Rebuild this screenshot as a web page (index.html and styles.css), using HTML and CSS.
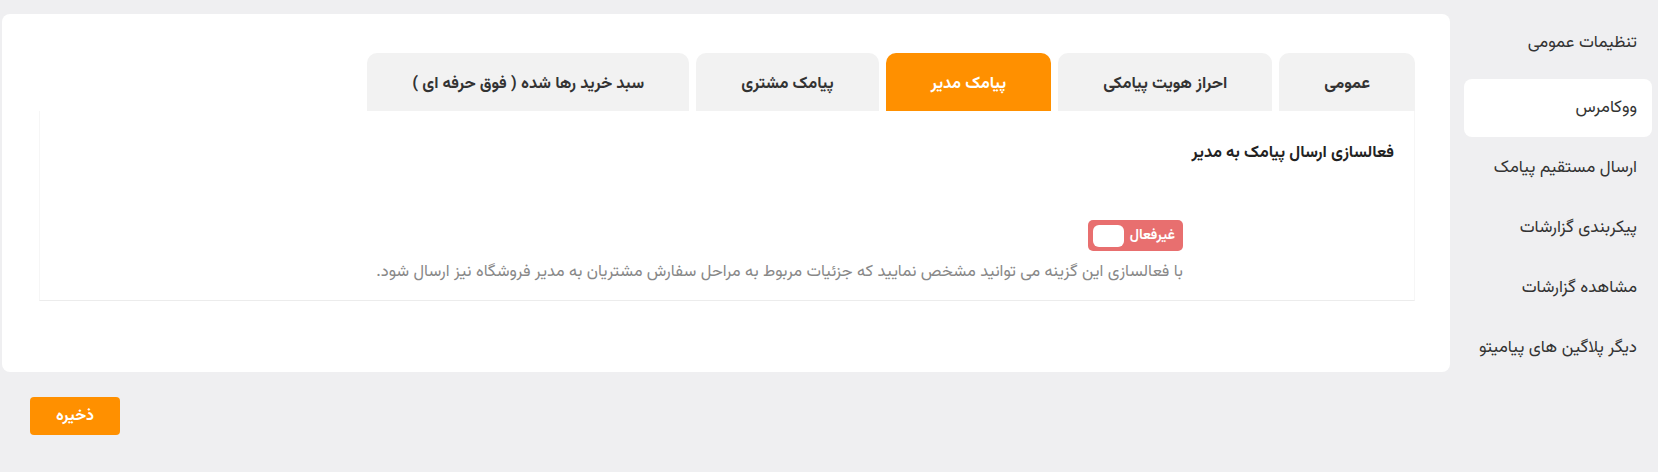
FILE: index.html
```html
<!DOCTYPE html>
<html lang="fa" dir="rtl">
<head>
<meta charset="utf-8">
<title>تنظیمات</title>
<link rel="stylesheet" href="styles.css">
</head>
<body>
<div class="layout">
  <nav class="sidebar">
    <a class="side-item">تنظیمات عمومی</a>
    <a class="side-item active">ووکامرس</a>
    <a class="side-item">ارسال مستقیم پیامک</a>
    <a class="side-item">پیکربندی گزارشات</a>
    <a class="side-item">مشاهده گزارشات</a>
    <a class="side-item">دیگر پلاگین های پیامیتو</a>
  </nav>
  <div class="main">
    <section class="card">
      <div class="tabs">
        <div class="tab">عمومی</div>
        <div class="tab">احراز هویت پیامکی</div>
        <div class="tab active">پیامک مدیر</div>
        <div class="tab">پیامک مشتری</div>
        <div class="tab">سبد خرید رها شده ( فوق حرفه ای )</div>
      </div>
      <div class="panel">
        <div class="row">
          <div class="label">فعالسازی ارسال پیامک به مدیر</div>
          <div class="field">
            <div class="toggle"><span class="toggle-text">غیرفعال</span><span class="knob"></span></div>
            <p class="desc">با فعالسازی این گزینه می توانید مشخص نمایید که جزئیات مربوط به مراحل سفارش مشتریان به مدیر فروشگاه نیز ارسال شود.</p>
          </div>
        </div>
      </div>
    </section>
    <div class="actions">
      <button class="save">ذخیره</button>
    </div>
  </div>
</div>
</body>
</html>
```

FILE: styles.css
```css
* { box-sizing: border-box; }
html, body { margin: 0; padding: 0; }
body {
  background: #efeff1;
  font-family: "Vazirmatn", "Vazir", "Noto Sans Arabic", "DejaVu Sans", sans-serif;
  color: #333;
  height: 472px;
  overflow: hidden;
}
.layout {
  display: flex;
  flex-direction: row;
  align-items: flex-start;
  padding: 14px 6px 0 2px;
  gap: 14px;
  width: 1658px;
}
.sidebar {
  width: 188px;
  flex: 0 0 188px;
  display: flex;
  flex-direction: column;
  gap: 2px;
  margin-top: 0;
}
.side-item {
  display: flex;
  align-items: center;
  height: 58px;
  padding: 0 15px;
  font-size: 17px;
  color: #333;
  border-radius: 8px;
  text-decoration: none;
  white-space: nowrap;
}
.side-item.active {
  background: #fff;
  margin-top: 5px;
}
.main {
  flex: 1;
  display: flex;
  flex-direction: column;
}
.card {
  background: #fff;
  border-radius: 8px;
  height: 358px;
  padding: 39px 35px 0 37px;
}
.tabs {
  display: flex;
  gap: 7px;
  height: 58px;
}
.tab {
  display: flex;
  align-items: center;
  justify-content: center;
  padding: 3px 45px 0;
  background: #f2f2f2;
  border-radius: 10px 10px 0 0;
  font-size: 16.5px;
  font-weight: 700;
  color: #333;
  white-space: nowrap;
}
.tab.active {
  background: #ff9000;
  color: #fff;
}
.panel {
  border: 1px solid #f6f6f6;
  border-top: 0;
  border-bottom: 1px solid #ececec;
  height: 190px;
}
.row {
  display: flex;
}
.label {
  width: 231px;
  flex: 0 0 231px;
  padding: 30px 20px 0 0;
  font-size: 16.5px;
  font-weight: 700;
  color: #222;
  line-height: 24px;
  white-space: nowrap;
}
.field {
  padding-top: 109px;
  flex: 1;
}
.toggle {
  display: inline-flex;
  align-items: center;
  gap: 6px;
  width: 95px;
  height: 31px;
  padding: 0 8px 0 5px;
  background: #e86f6f;
  border-radius: 5px;
}
.toggle-text {
  color: #fff;
  font-size: 14px;
  font-weight: 700;
  white-space: nowrap;
}
.knob {
  width: 32px;
  height: 22px;
  background: #fff;
  border-radius: 6px;
  margin-right: auto;
}
.desc {
  margin: 9px 0 0;
  font-size: 16.5px;
  line-height: 24px;
  color: #888;
}
.actions {
  display: flex;
  justify-content: flex-end;
  padding: 25px 0 0 28px;
}
.save {
  width: 90px;
  height: 38px;
  border: 0;
  border-radius: 4px;
  background: #ff9000;
  color: #fff;
  font-family: inherit;
  font-size: 16px;
  font-weight: 700;
  cursor: pointer;
}
```
